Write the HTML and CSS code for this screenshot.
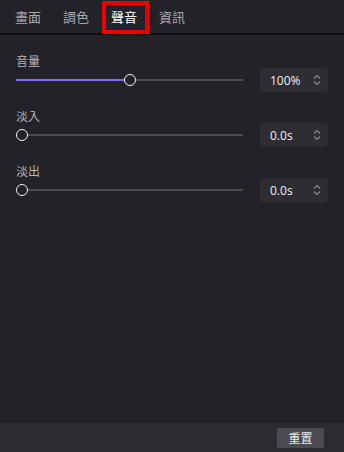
FILE: index.html
```html
<!DOCTYPE html>
<html lang="zh-Hant">
<head>
<meta charset="utf-8">
<link rel="stylesheet" href="styles.css">
</head>
<body>
<div class="app">
  <nav class="tabs">
    <span class="tab">畫面</span>
    <span class="tab">調色</span>
    <span class="tab active">聲音</span>
    <span class="tab">資訊</span>
  </nav>
  <main class="panel">
    <section class="field">
      <div class="label">音量</div>
      <div class="row">
        <div class="slider">
          <div class="fill" style="width:50%"></div>
          <div class="thumb mid" style="left:50%"></div>
        </div>
        <div class="spin"><span class="val">100%</span>
          <svg class="arrows" width="10" height="12" viewBox="0 0 10 12"><path d="M2 4.5 L5 1.5 L8 4.5 M2 7.5 L5 10.5 L8 7.5" fill="none" stroke="#8a8990" stroke-width="1.2"/></svg>
        </div>
      </div>
    </section>
    <section class="field">
      <div class="label">淡入</div>
      <div class="row">
        <div class="slider">
          <div class="thumb"></div>
        </div>
        <div class="spin"><span class="val">0.0s</span>
          <svg class="arrows" width="10" height="12" viewBox="0 0 10 12"><path d="M2 4.5 L5 1.5 L8 4.5 M2 7.5 L5 10.5 L8 7.5" fill="none" stroke="#8a8990" stroke-width="1.2"/></svg>
        </div>
      </div>
    </section>
    <section class="field">
      <div class="label">淡出</div>
      <div class="row">
        <div class="slider">
          <div class="thumb"></div>
        </div>
        <div class="spin"><span class="val">0.0s</span>
          <svg class="arrows" width="10" height="12" viewBox="0 0 10 12"><path d="M2 4.5 L5 1.5 L8 4.5 M2 7.5 L5 10.5 L8 7.5" fill="none" stroke="#8a8990" stroke-width="1.2"/></svg>
        </div>
      </div>
    </section>
  </main>
  <footer class="footer">
    <button class="reset">重置</button>
  </footer>
</div>
</body>
</html>
```
FILE: styles.css
```css
* { box-sizing: border-box; }
html, body { margin: 0; padding: 0; }
body {
  width: 344px;
  height: 452px;
  background: #232228;
  font-family: "Noto Sans CJK TC", "Noto Sans", sans-serif;
  color: #c9c9cc;
  overflow: hidden;
}
.app {
  display: flex;
  flex-direction: column;
  height: 452px;
}
.tabs {
  display: flex;
  align-items: center;
  height: 35px;
  padding-left: 15px;
  gap: 22px;
  border-bottom: 2px solid #0f0f12;
  background: #232228;
}
.tab {
  font-size: 13px;
  line-height: 18px;
  color: #a9a8ad;
  position: relative;
}
.tab.active {
  color: #ffffff;
}
.tab.active::after {
  content: "";
  position: absolute;
  left: -9px;
  right: -12px;
  top: -7px;
  bottom: -8px;
  border: 4px solid #ee0000;
}
.panel {
  flex: 1;
  padding: 17px 16px 0 16px;
  display: flex;
  flex-direction: column;
  gap: 15px;
}
.field {
  display: flex;
  flex-direction: column;
}
.label {
  font-size: 12px;
  line-height: 18px;
  margin-bottom: -2px;
  color: #b4b3b8;
}
.row {
  display: flex;
  align-items: center;
  gap: 17px;
  height: 24px;
}
.slider {
  position: relative;
  flex: 1;
  height: 2px;
  background: #4b4a50;
}
.fill {
  position: absolute;
  left: 0; top: 0; bottom: 0;
  background: #7c6cf2;
}
.thumb {
  position: absolute;
  left: 0;
  top: 50%;
  width: 12px;
  height: 12px;
  margin-top: -6px;
  border: 1.5px solid #f2f2f4;
  border-radius: 50%;
  background: #232228;
}
.thumb.mid { margin-left: -6px; }
.spin {
  width: 68px;
  height: 24px;
  background: #2e2d33;
  border-radius: 4px;
  display: flex;
  align-items: center;
  justify-content: space-between;
  padding: 0 6px 0 10px;
}
.val {
  font-family: "Open Sans", "Noto Sans", sans-serif;
  font-size: 12px;
  color: #f0f0f2;
}
.arrows { display: block; }
.footer {
  height: 29px;
  background: #2c2b31;
  display: flex;
  align-items: center;
  justify-content: flex-end;
  padding-right: 20px;
}
.reset {
  width: 47px;
  height: 20px;
  border: none;
  border-radius: 1px;
  background: #4b4a51;
  color: #ededf0;
  font-family: "Noto Sans CJK TC", sans-serif;
  font-size: 12px;
  padding: 0;
  line-height: 20px;
}
```
